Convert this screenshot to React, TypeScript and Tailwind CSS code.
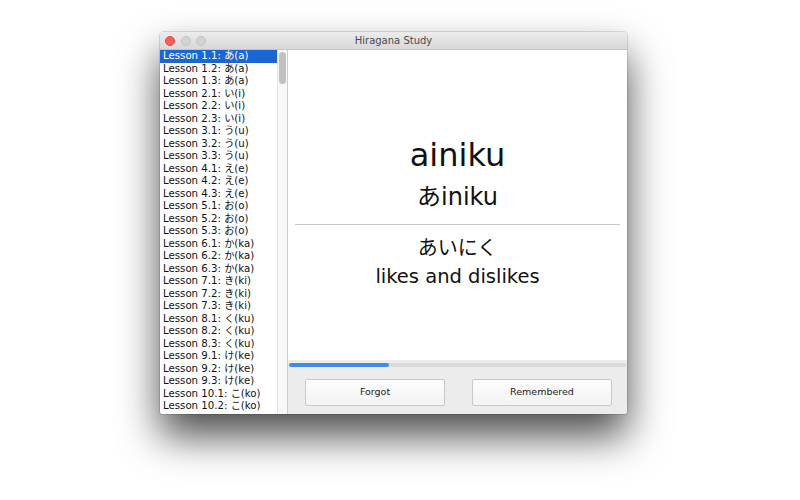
import React from 'react';

const kana: [string, string][] = [
  ['あ', 'a'],
  ['い', 'i'],
  ['う', 'u'],
  ['え', 'e'],
  ['お', 'o'],
  ['か', 'ka'],
  ['き', 'ki'],
  ['く', 'ku'],
  ['け', 'ke'],
  ['こ', 'ko'],
];

// only the rows that fit in the list are shown
const lessons = kana
  .flatMap(([k, r], i) => [1, 2, 3].map((n) => `Lesson ${i + 1}.${n}: ${k}(${r})`))
  .slice(0, 29);

const font = "font-['DejaVu_Sans','Noto_Sans_CJK_JP',sans-serif]";

export default function App() {
  return (
    <div className={`w-[800px] h-[500px] bg-white pt-[32px] pl-[160px] ${font}`}>
      <div className="w-[467px] h-[382px] flex flex-col rounded-t-[4px] rounded-b-[3px] overflow-hidden shadow-[0_22px_40px_rgba(0,0,0,0.7),0_0_0_1px_rgba(0,0,0,0.12)]">
        {/* title bar */}
        <div className="h-[18px] grid grid-cols-[1fr_auto_1fr] items-center bg-gradient-to-b from-[#ececec] to-[#d8d8d8] border-b border-[#c4c4c4]">
          <div className="flex items-center gap-[5.5px] pl-[5px]">
            <span className="w-[10px] h-[10px] rounded-full bg-[#fc5f57] border border-[#e0443e]" />
            <span className="w-[10px] h-[10px] rounded-full bg-[#d3d3d3] border border-[#c2c2c2]" />
            <span className="w-[10px] h-[10px] rounded-full bg-[#d3d3d3] border border-[#c2c2c2]" />
          </div>
          <div className="text-[10px] text-[#4a4a4a] leading-none">Hiragana Study</div>
          <div />
        </div>

        {/* body */}
        <div className="flex flex-1 min-h-0">
          <div className="w-[117px] bg-white overflow-hidden">
            {lessons.map((l, i) => (
              <div
                key={l}
                className={`h-[12.5px] leading-[12.5px] pl-[3px] text-[10.2px] whitespace-nowrap ${
                  i === 0 ? 'bg-[#1b66d6] text-white' : 'text-[#111]'
                }`}
              >
                {l}
              </div>
            ))}
          </div>
          <div className="w-[10px] bg-[#f8f8f8] border-l border-[#e4e4e4]">
            <div className="mt-[2px] ml-[1px] w-[6.5px] h-[32px] rounded-full bg-[#c1c1c1]" />
          </div>
          <div className="w-px bg-[#cdcdcd]" />

          <div className="flex-1 flex flex-col">
            <div className="h-[310px] bg-white flex flex-col pt-[87px] text-center text-[#111]">
              <div className="text-[32px] leading-[36px]">ainiku</div>
              <div className="mt-[11px] text-[24px] leading-[26px]">あiniku</div>
              <div className="mt-[14px] mx-[7px] h-px bg-[#c8c8c8]" />
              <div className="mt-[13px] text-[20px] leading-[20px]">あいにく</div>
              <div className="mt-[8px] text-[19.5px] leading-[22px]">likes and dislikes</div>
            </div>
            <div className="flex-1 bg-[#ececec] pt-[3px]">
              <div className="mx-px h-[4px] rounded-full bg-[#dadada]">
                <div className="w-[100px] h-full rounded-full bg-[#3a8ee9]" />
              </div>
              <div className="mt-[12px] flex pl-[17px] gap-[27px]">
                {['Forgot', 'Remembered'].map((b) => (
                  <button
                    key={b}
                    className="w-[140px] h-[27px] bg-gradient-to-b from-[#fdfdfd] to-[#f3f3f3] border border-[#c9c9c9] rounded-[2px] text-[9.5px] text-[#222]"
                  >
                    {b}
                  </button>
                ))}
              </div>
            </div>
          </div>
        </div>
      </div>
    </div>
  );
}
